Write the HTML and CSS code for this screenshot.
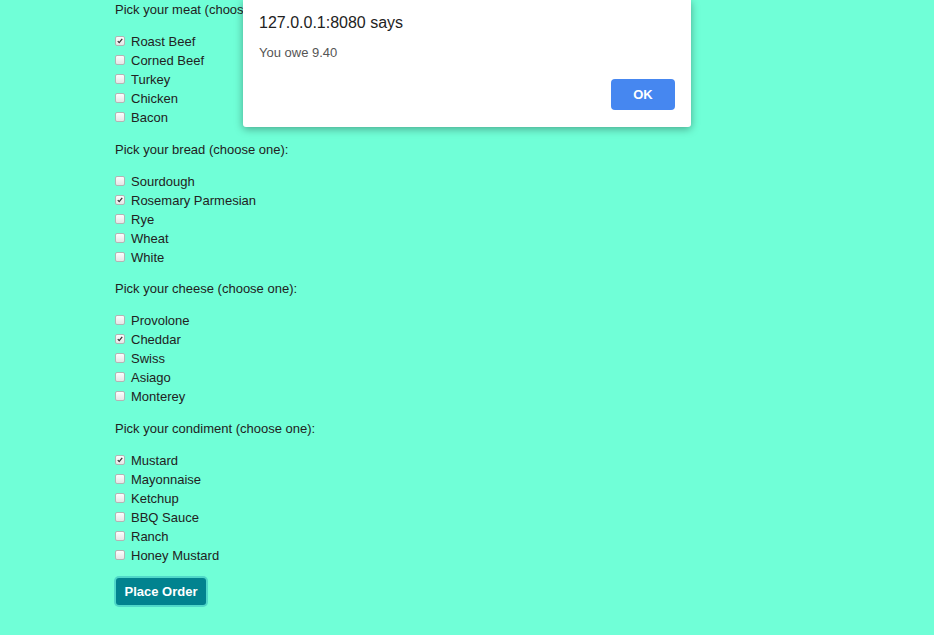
FILE: index.html
```html
<!DOCTYPE html>
<html>
<head>
<meta charset="utf-8">
<link rel="stylesheet" href="styles.css">
</head>
<body>
<form class="order">
  <div class="group">
    <p class="q">Pick your meat (choose one):</p>
    <label class="opt"><input type="checkbox" checked>Roast Beef</label>
    <label class="opt"><input type="checkbox">Corned Beef</label>
    <label class="opt"><input type="checkbox">Turkey</label>
    <label class="opt"><input type="checkbox">Chicken</label>
    <label class="opt"><input type="checkbox">Bacon</label>
  </div>
  <div class="group">
    <p class="q">Pick your bread (choose one):</p>
    <label class="opt"><input type="checkbox">Sourdough</label>
    <label class="opt"><input type="checkbox" checked>Rosemary Parmesian</label>
    <label class="opt"><input type="checkbox">Rye</label>
    <label class="opt"><input type="checkbox">Wheat</label>
    <label class="opt"><input type="checkbox">White</label>
  </div>
  <div class="group">
    <p class="q">Pick your cheese (choose one):</p>
    <label class="opt"><input type="checkbox">Provolone</label>
    <label class="opt"><input type="checkbox" checked>Cheddar</label>
    <label class="opt"><input type="checkbox">Swiss</label>
    <label class="opt"><input type="checkbox">Asiago</label>
    <label class="opt"><input type="checkbox">Monterey</label>
  </div>
  <div class="group last">
    <p class="q">Pick your condiment (choose one):</p>
    <label class="opt"><input type="checkbox" checked>Mustard</label>
    <label class="opt"><input type="checkbox">Mayonnaise</label>
    <label class="opt"><input type="checkbox">Ketchup</label>
    <label class="opt"><input type="checkbox">BBQ Sauce</label>
    <label class="opt"><input type="checkbox">Ranch</label>
    <label class="opt"><input type="checkbox">Honey Mustard</label>
  </div>
  <button type="button" class="place">Place Order</button>
</form>

<div class="dialog">
  <div class="d-title">127.0.0.1:8080 says</div>
  <div class="d-msg">You owe 9.40</div>
  <div class="d-actions"><button type="button" class="ok">OK</button></div>
</div>
</body>
</html>
```

FILE: styles.css
```css
html, body {
  margin: 0;
  padding: 0;
  height: 100%;
  overflow: hidden;
}
body {
  background: #70ffd7;
  font-family: "Liberation Sans", Arial, sans-serif;
  font-size: 13px;
  color: #222;
}
.order {
  display: flex;
  flex-direction: column;
  align-items: flex-start;
  padding-left: 115px;
}
.group {
  display: flex;
  flex-direction: column;
  margin-bottom: 12.5px;
}
.group.last {
  margin-bottom: 13.5px;
}
.q {
  margin: 0 0 13px 0;
  line-height: 19px;
}
.opt {
  display: flex;
  align-items: center;
  height: 19px;
  line-height: 19px;
}
.opt input {
  -webkit-appearance: none;
  appearance: none;
  width: 10px;
  height: 10px;
  margin: 0 6px 1px 0;
  border: 1px solid #b4b4b4;
  border-radius: 2px;
  background: linear-gradient(#fdfdfd, #e6e6e6);
  box-sizing: border-box;
}
.opt input:checked {
  background: url("data:image/svg+xml,%3Csvg xmlns='http://www.w3.org/2000/svg' viewBox='0 0 10 10'%3E%3Cpath d='M2.2 5.2 L4 7 L7.8 2.4' fill='none' stroke='%23333' stroke-width='1.6'/%3E%3C/svg%3E") center/8px 8px no-repeat, linear-gradient(#fdfdfd, #e6e6e6);
}
.place {
  margin-left: 1px;
  width: 90px;
  height: 27px;
  background: #01838f;
  color: #fff;
  border: none;
  border-radius: 3px;
  font-family: "Liberation Sans", Arial, sans-serif;
  font-weight: bold;
  font-size: 13px;
  box-shadow: 0 0 0 2px #4fd8c9;
  padding: 0;
}
.dialog {
  position: absolute;
  left: 243px;
  top: 0;
  width: 448px;
  height: 127px;
  box-sizing: border-box;
  background: #fff;
  border-radius: 0 0 3px 3px;
  box-shadow: 0 2px 8px rgba(0, 0, 0, 0.35);
  padding: 13px 16px 0 16px;
  display: flex;
  flex-direction: column;
}
.d-title {
  font-size: 16px;
  line-height: 20px;
  color: #222;
}
.d-msg {
  margin-top: 10px;
  font-size: 13px;
  line-height: 20px;
  color: #555;
}
.d-actions {
  display: flex;
  justify-content: flex-end;
  margin-top: 16px;
}
.ok {
  width: 64px;
  height: 31px;
  border: none;
  border-radius: 4px;
  background: #4687f0;
  color: #fff;
  font-family: "Liberation Sans", Arial, sans-serif;
  font-weight: bold;
  font-size: 13px;
  padding: 0;
}
```
